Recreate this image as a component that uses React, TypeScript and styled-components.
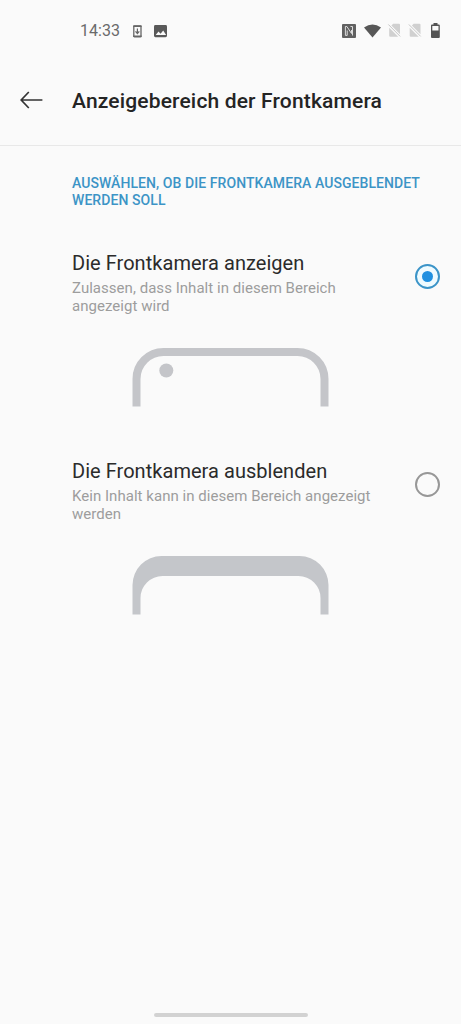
import React from 'react';
import styled, { createGlobalStyle } from 'styled-components';

const GlobalStyle = createGlobalStyle`
  * { box-sizing: border-box; }
  body { margin: 0; background: #fafafa; font-family: Roboto, "Noto Sans", sans-serif; }
  svg { display: block; flex: none; }
`;

const Screen = styled.div`
  display: flex;
  flex-direction: column;
  width: 461px;
  height: 1024px;
  background: #fafafa;
`;

const StatusBar = styled.div`
  display: flex;
  align-items: center;
  justify-content: space-between;
  height: 62px;
  padding: 0 20px 0 80px;
`;

const StatusGroup = styled.div`
  display: flex;
  align-items: center;
`;

const Clock = styled.span`
  width: 53px;
  font-size: 16px;
  line-height: 20px;
  letter-spacing: 0.04px;
  color: #6a6a6a;
`;

const Header = styled.header`
  display: flex;
  align-items: center;
  height: 84px;
  padding: 0 20px 6px;
  border-bottom: 1px solid #e8e8e8;
`;

const BackButton = styled.button`
  width: 52px;
  padding: 0 0 2px;
  border: 0;
  background: none;
`;

const Title = styled.h1`
  margin: 0;
  font-size: 21px;
  font-weight: 500;
  line-height: 26px;
  letter-spacing: 0.16px;
  white-space: nowrap;
  color: #242424;
`;

const Content = styled.main`
  flex: 1;
  padding: 29px 21px 0 72px;
`;

const SectionLabel = styled.h2`
  margin: 0 0 41px;
  font-size: 14px;
  font-weight: 500;
  line-height: 17px;
  letter-spacing: 0.07px;
  white-space: nowrap;
  color: #3c94c6;
`;

const Option = styled.section`
  height: 208px;
`;

const OptionRow = styled.div`
  display: flex;
  justify-content: space-between;
  height: 98px;
`;

const OptionTitle = styled.div`
  font-size: 20px;
  line-height: 26px;
  letter-spacing: 0.04px;
  margin: 0 0 3px;
  white-space: nowrap;
  color: #2b2b2b;
`;

const OptionText = styled.div`
  font-size: 15px;
  line-height: 18px;
  letter-spacing: 0.035px;
  white-space: nowrap;
  color: #9d9d9d;
`;

const Radio = styled.span<{ $checked?: boolean }>`
  display: flex;
  align-items: center;
  justify-content: center;
  flex: none;
  width: 25px;
  height: 25px;
  margin-top: 14px;
  border: 2px solid ${(p) => (p.$checked ? '#3b94c8' : '#979797')};
  border-radius: 50%;
  background: ${(p) => (p.$checked ? '#effbff' : 'transparent')};

  &::after {
    content: '';
    width: 11px;
    height: 11px;
    border-radius: 50%;
    background: ${(p) => (p.$checked ? '#2090e0' : 'transparent')};
  }
`;

const Illustration = styled.div`
  padding-left: 60px;
`;

const NavigationArea = styled.div`
  display: flex;
  justify-content: center;
  height: 11px;
`;

const HomeIndicator = styled.div`
  width: 154px;
  height: 4px;
  border-radius: 2px;
  background: #d2d2d2;
`;

const PhoneWithCamera = () => (
  <svg width="197" height="60" viewBox="0 0 197 60">
    <path d="M4.5 58.5V31A27 27 0 0 1 31.5 4H165.5A27 27 0 0 1 192.5 31V58.5" fill="none" stroke="#c4c5c9" strokeWidth="8" />
    <circle cx="34.3" cy="22.5" r="7" fill="#c4c5c9" />
  </svg>
);

const PhoneHiddenCamera = () => (
  <svg width="197" height="60" viewBox="0 0 197 60">
    <path d="M.5 58.5V29A29 29 0 0 1 29.5 0H167.5A29 29 0 0 1 196.5 29V58.5H188.5V42A22 22 0 0 0 166.5 20H30.5A22 22 0 0 0 8.5 42V58.5Z" fill="#c4c6ca" />
  </svg>
);

const NotificationIcons = () => (
  <svg width="36" height="16" viewBox="0 0 36 16">
    <rect x=".8" y="2.8" width="7.2" height="11" rx=".6" fill="none" stroke="#666" strokeWidth="1.3" />
    <path d="M.2 3.2h8.4M.2 13.3h8.4" stroke="#666" strokeWidth="1.5" />
    <path d="M4.4 5.5v5M2.5 8.4l1.9 2.1 1.9-2.1" fill="none" stroke="#666" strokeWidth="1.2" />
    <rect x="21" y="2" width="13" height="12.2" rx="1.4" fill="#595959" />
    <path d="M22.7 12l2.8-3.6 2.1 2.4 2.6-3.4 2.9 4.6z" fill="#fafafa" />
  </svg>
);

const SimOff = ({ x }: { x: number }) => (
  <g transform={`translate(${x} 0)`}>
    <path d="M5.2 1.8H11a1 1 0 0 1 1 1v9.4L3.4 3.6zM1.2 5.8l9 9H2.2a1 1 0 0 1-1-1z" fill="#d0d0d0" />
    <path d="M.4 2.5L12.2 14.4" stroke="#c6c6c6" strokeWidth="1" />
  </g>
);

const SystemIcons = () => (
  <svg width="99" height="18" viewBox="0 0 99 18">
    <rect x="0" y="2" width="14" height="14" rx="1" fill="#616161" />
    <path d="M5.2 13.4H3.4V4.500h1.500l4.600 7V8M8.500 4.500h2v9M5.200 13.400V8.500" fill="none" stroke="#dcdcdc" strokeWidth="1" />
    <path d="M22 5.5Q30.5-.5 39 5.5L30.5 15.5z" fill="#575757" />
    <SimOff x={46} />
    <SimOff x={66.5} />
    <path d="M91.500 1h4v1.500h1.300a1 1 0 0 1 1 1V15a1 1 0 0 1-1 1h-6.800a1 1 0 0 1-1-1V3.500a1 1 0 0 1 1-1h1.500z" fill="#545454" />
    <rect x="90.3" y="4" width="6.2" height="4.5" fill="#fafafa" />
  </svg>
);

const BackArrow = () => (
  <svg width="24" height="18" viewBox="0 0 24 18">
    <path d="M22.4 9H1.5M8.8 1L1.2 9l7.6 8" fill="none" stroke="#333" strokeWidth="1.7" />
  </svg>
);

export default function App() {
  return (
    <Screen>
      <GlobalStyle />
      <StatusBar>
        <StatusGroup>
          <Clock>14:33</Clock>
          <NotificationIcons />
        </StatusGroup>
        <SystemIcons />
      </StatusBar>
      <Header>
        <BackButton aria-label="Zurück">
          <BackArrow />
        </BackButton>
        <Title>Anzeigebereich der Frontkamera</Title>
      </Header>
      <Content>
        <SectionLabel>
          AUSWÄHLEN, OB DIE FRONTKAMERA AUSGEBLENDET
          <br />
          WERDEN SOLL
        </SectionLabel>
        <Option>
          <OptionRow>
            <div>
              <OptionTitle>Die Frontkamera anzeigen</OptionTitle>
              <OptionText>
                Zulassen, dass Inhalt in diesem Bereich
                <br />
                angezeigt wird
              </OptionText>
            </div>
            <Radio $checked role="radio" aria-checked="true" />
          </OptionRow>
          <Illustration>
            <PhoneWithCamera />
          </Illustration>
        </Option>
        <Option>
          <OptionRow>
            <div>
              <OptionTitle>Die Frontkamera ausblenden</OptionTitle>
              <OptionText>
                Kein Inhalt kann in diesem Bereich angezeigt
                <br />
                werden
              </OptionText>
            </div>
            <Radio role="radio" aria-checked="false" />
          </OptionRow>
          <Illustration>
            <PhoneHiddenCamera />
          </Illustration>
        </Option>
      </Content>
      <NavigationArea>
        <HomeIndicator />
      </NavigationArea>
    </Screen>
  );
}
